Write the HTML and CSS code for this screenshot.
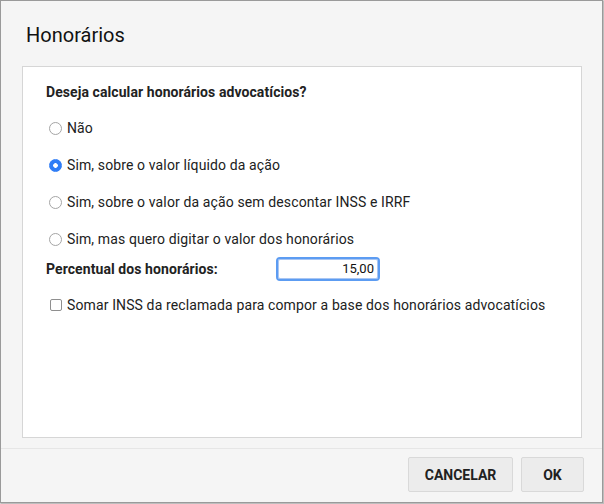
FILE: index.html
```html
<!DOCTYPE html>
<html lang="pt-BR">
<head>
<meta charset="utf-8">
<title>Honorários</title>
<link rel="stylesheet" href="styles.css">
</head>
<body>
<div class="dialog">
  <div class="header"><h1 class="title">Honorários</h1></div>
  <div class="panel">
    <p class="question">Deseja calcular honorários advocatícios?</p>
    <label class="row radio-row first"><span class="radio"></span><span>Não</span></label>
    <label class="row radio-row"><span class="radio checked"></span><span>Sim, sobre o valor líquido da ação</span></label>
    <label class="row radio-row"><span class="radio"></span><span>Sim, sobre o valor da ação sem descontar INSS e IRRF</span></label>
    <label class="row radio-row"><span class="radio"></span><span>Sim, mas quero digitar o valor dos honorários</span></label>
    <div class="field-row">
      <span class="field-label">Percentual dos honorários:</span>
      <span class="input">15,00</span>
    </div>
    <label class="row check-row"><span class="checkbox"></span><span>Somar INSS da reclamada para compor a base dos honorários advocatícios</span></label>
  </div>
  <div class="footer">
    <button class="btn btn-cancel">CANCELAR</button>
    <button class="btn btn-ok">OK</button>
  </div>
</div>
</body>
</html>
```

FILE: styles.css
```css
* { box-sizing: border-box; }
html, body { margin: 0; padding: 0; }
body {
  background: #d4d4d4;
  font-family: Roboto, "Liberation Sans", Arial, sans-serif;
  color: #212121;
  width: 604px;
  height: 504px;
  overflow: hidden;
}
.dialog {
  width: 603px;
  height: 503px;
  border: 1px solid #9a9a9a;
  background: #f5f5f5;
  display: flex;
  flex-direction: column;
  box-shadow: 1px 1px 0 #bdbdbd;
}
.header {
  height: 65px;
  padding: 22px 0 0 25px;
}
.title {
  margin: 0;
  font-size: 20px;
  line-height: 24px;
  font-weight: 400;
  color: #111;
}
.panel {
  margin-left: 21px;
  width: 560px;
  height: 372px;
  background: #fff;
  border: 1px solid #d6d6d6;
  padding: 17px 0 0 23px;
  font-size: 14px;
  line-height: 16px;
  letter-spacing: 0.12px;
}
.question {
  margin: 0;
  font-weight: 700;
  color: #222;
  letter-spacing: 0.08px;
}
.row {
  display: flex;
  align-items: center;
  height: 16px;
  margin-top: 21px;
}
.radio-row.first { margin-top: 20px; }
.radio {
  width: 13px;
  height: 13px;
  border: 1px solid #a5a5a5;
  border-radius: 50%;
  margin: 0 5px 0 3px;
  background: #fff;
  flex: none;
}
.radio.checked {
  border-color: #2f7df6;
  background: radial-gradient(circle, #fff 0 2px, #2f7df6 2.6px);
}
.field-row {
  display: flex;
  align-items: center;
  height: 20px;
  margin-top: 12px;
}
.field-label {
  width: 232px;
  font-weight: 700;
  color: #222;
  letter-spacing: 0.08px;
}
.input {
  width: 100px;
  height: 20px;
  border: 1px solid #a9c6f3;
  outline: 2px solid #5c9cf2;
  border-radius: 2px;
  text-align: right;
  padding-right: 3px;
  font-size: 13px;
  line-height: 18px;
  letter-spacing: 0;
  color: #111;
}
.check-row { margin-top: 18px; }
.checkbox {
  width: 12px;
  height: 12px;
  border: 1px solid #8f8f8f;
  border-radius: 2px;
  margin: 0 5px 0 4px;
  flex: none;
  background: #fff;
}
.footer {
  margin-top: 10px;
  border-top: 1px solid #e6e6e6;
  display: flex;
  justify-content: flex-end;
  gap: 8px;
  padding: 8px 18px 0 0;
}
.btn {
  height: 35px;
  background: #ececec;
  border: 1px solid #d9d9d9;
  border-radius: 2px;
  font-family: Roboto, "Liberation Sans", Arial, sans-serif;
  font-size: 14px;
  font-weight: 700;
  color: #212121;
  padding: 0;
}
.btn-cancel { width: 105px; }
.btn-ok { width: 63px; }
```
